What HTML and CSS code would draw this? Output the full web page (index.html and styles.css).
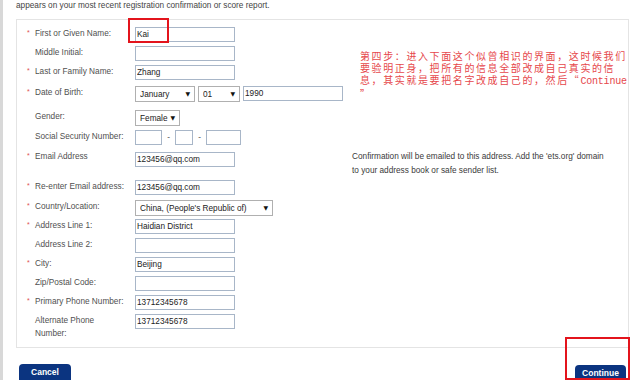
FILE: index.html
```html
<!DOCTYPE html>
<html lang="en">
<head>
    <meta charset="UTF-8">
    <meta name="viewport" content="width=device-width, initial-scale=1.0">
    <title>Profile Information</title>
    <link rel="stylesheet" href="styles.css">
</head>
<body>
    <div class="page">
        <p class="intro">appears on your most recent registration confirmation or score report.</p>

        <form class="panel">
            <div class="row">
                <label class="label"><span class="req">*</span>First or Given Name:</label>
                <input class="field" type="text" value="Kai">
            </div>
            <div class="row">
                <label class="label"><span class="req"></span>Middle Initial:</label>
                <input class="field" type="text">
            </div>
            <div class="row">
                <label class="label"><span class="req">*</span>Last or Family Name:</label>
                <input class="field" type="text" value="Zhang">
            </div>
            <div class="row row-dob">
                <label class="label"><span class="req">*</span>Date of Birth:</label>
                <span class="select month"><select><option>January</option></select></span>
                <span class="select day"><select><option>01</option></select></span>
                <input class="field year" type="text" value="1990">
            </div>
            <div class="row row-gender">
                <label class="label"><span class="req"></span>Gender:</label>
                <span class="select gender"><select><option>Female</option></select></span>
            </div>
            <div class="row">
                <label class="label"><span class="req"></span>Social Security Number:</label>
                <input class="field ssn1" type="text">
                <span class="dash">-</span>
                <input class="field ssn2" type="text">
                <span class="dash">-</span>
                <input class="field ssn3" type="text">
            </div>
            <div class="row row-email">
                <label class="label"><span class="req">*</span>Email Address</label>
                <input class="field" type="text" value="123456@qq.com">
                <p class="note">Confirmation will be emailed to this address. Add the 'ets.org' domain<br>to your address book or safe sender list.</p>
            </div>
            <div class="row row-reenter">
                <label class="label"><span class="req">*</span>Re-enter Email address:</label>
                <input class="field" type="text" value="123456@qq.com">
            </div>
            <div class="row row-country">
                <label class="label"><span class="req">*</span>Country/Location:</label>
                <span class="select country"><select><option>China, (People's Republic of)</option></select></span>
            </div>
            <div class="row row-addr">
                <label class="label"><span class="req">*</span>Address Line 1:</label>
                <input class="field" type="text" value="Haidian District">
            </div>
            <div class="row">
                <label class="label"><span class="req"></span>Address Line 2:</label>
                <input class="field" type="text">
            </div>
            <div class="row">
                <label class="label"><span class="req">*</span>City:</label>
                <input class="field" type="text" value="Beijing">
            </div>
            <div class="row">
                <label class="label"><span class="req"></span>Zip/Postal Code:</label>
                <input class="field" type="text">
            </div>
            <div class="row">
                <label class="label"><span class="req">*</span>Primary Phone Number:</label>
                <input class="field" type="text" value="13712345678">
            </div>
            <div class="row">
                <label class="label"><span class="req"></span>Alternate Phone<br>Number:</label>
                <input class="field" type="text" value="13712345678">
            </div>
        </form>

        <div class="actions">
            <button class="btn" type="button">Cancel</button>
            <button class="btn" type="button">Continue</button>
        </div>
    </div>

    <!-- tutorial annotations drawn over the screenshot -->
    <div class="mark mark-name"></div>
    <div class="mark mark-continue"></div>
    <p class="tip">第四步：进入下面这个似曾相识的界面，这时候我们<br>要验明正身，把所有的信息全部改成自己真实的信<br>息，其实就是要把名字改成自己的，然后“<span class="tip-latin">Continue</span><br>”</p>
</body>
</html>
```

FILE: styles.css
```css
* {
    margin: 0;
    padding: 0;
    box-sizing: border-box;
}

body {
    background: #fff;
    font-family: "Liberation Sans", Arial, sans-serif;
    font-size: 8.25px;
    color: #4a4a4a;
    overflow: hidden;
}

.page {
    min-height: 100vh;
    border-left: 3px solid #d8d8d8;
    padding: 0 11px 0 13px;
}

.intro {
    line-height: 12px;
    color: #444;
}

.panel {
    margin-top: 7px;
    border: 1px solid #e4e4e4;
    padding: 7px 10px 7px;
}

.row {
    display: flex;
    align-items: flex-start;
    margin-top: 4px;
}

.row:first-child {
    margin-top: 0;
}

.row-dob { margin-top: 6px; }
.row-gender { margin-top: 8px; }
.row-email { margin-top: 5px; height: 28px; }
.row-reenter { margin-top: 2px; }
.row-country { margin-top: 5px; }
.row-addr { margin-top: 3px; }

.label {
    display: flex;
    width: 108px;
    flex-shrink: 0;
    line-height: 13px;
    color: #505050;
}

.req {
    width: 8px;
    flex-shrink: 0;
    color: #e05050;
    font-size: 7px;
    line-height: 11px;
}

.field {
    width: 100px;
    height: 15px;
    border: 1px solid #a8b6c8;
    padding: 0 1px;
    font-family: "Liberation Sans", Arial, sans-serif;
    font-size: 8.25px;
    color: #222;
    background: #fff;
    outline: none;
}

.row-email .field {
    margin-top: 2px;
}

.year { width: 100px; margin-left: 3px; }
.ssn1 { width: 27px; }
.ssn2 { width: 18px; }
.ssn3 { width: 35px; }

.dash {
    width: 13px;
    text-align: center;
    line-height: 15px;
    color: #555;
}

.select {
    position: relative;
    display: block;
    height: 16px;
}

.select select {
    appearance: none;
    -webkit-appearance: none;
    width: 100%;
    height: 16px;
    border: 1px solid #b0b0b0;
    background: #fff;
    padding: 0 0 0 4px;
    font-family: "Liberation Sans", Arial, sans-serif;
    font-size: 8.25px;
    color: #222;
    outline: none;
}

.select::after {
    content: "▼";
    position: absolute;
    right: 5px;
    top: 4px;
    font-family: "DejaVu Sans", sans-serif;
    font-size: 6px;
    line-height: 8px;
    color: #111;
}

.month { width: 60px; }
.day { width: 42px; margin-left: 3px; }
.gender { width: 45px; }
.country { width: 138px; }

.note {
    margin-left: 117px;
    margin-top: 0;
    line-height: 14px;
    color: #3a3a3a;
}

.actions {
    display: flex;
    justify-content: space-between;
    margin-top: 16px;
    padding: 0 3px;
}

.btn {
    width: 52px;
    height: 20px;
    border: none;
    border-radius: 4px;
    background: #0b3480;
    color: #fff;
    font-family: "Liberation Sans", Arial, sans-serif;
    font-size: 8.5px;
    font-weight: bold;
    line-height: 16px;
    padding-bottom: 4px;
}

.btn:last-child {
    width: 51px;
    margin-top: 1px;
}

.mark {
    position: absolute;
    border: 2px solid #e3141c;
}

.mark-name {
    left: 128px;
    top: 18px;
    width: 41px;
    height: 25px;
}

.mark-continue {
    left: 565px;
    top: 337px;
    width: 65px;
    height: 43px;
}

.tip {
    position: absolute;
    left: 360px;
    top: 50px;
    white-space: nowrap;
    font-family: "Noto Sans CJK SC", sans-serif;
    font-size: 10px;
    letter-spacing: 1.6px;
    line-height: 12px;
    color: #e6474b;
}

.tip-latin {
    font-family: "Liberation Mono", monospace;
    font-size: 10px;
    letter-spacing: -0.2px;
}
```
